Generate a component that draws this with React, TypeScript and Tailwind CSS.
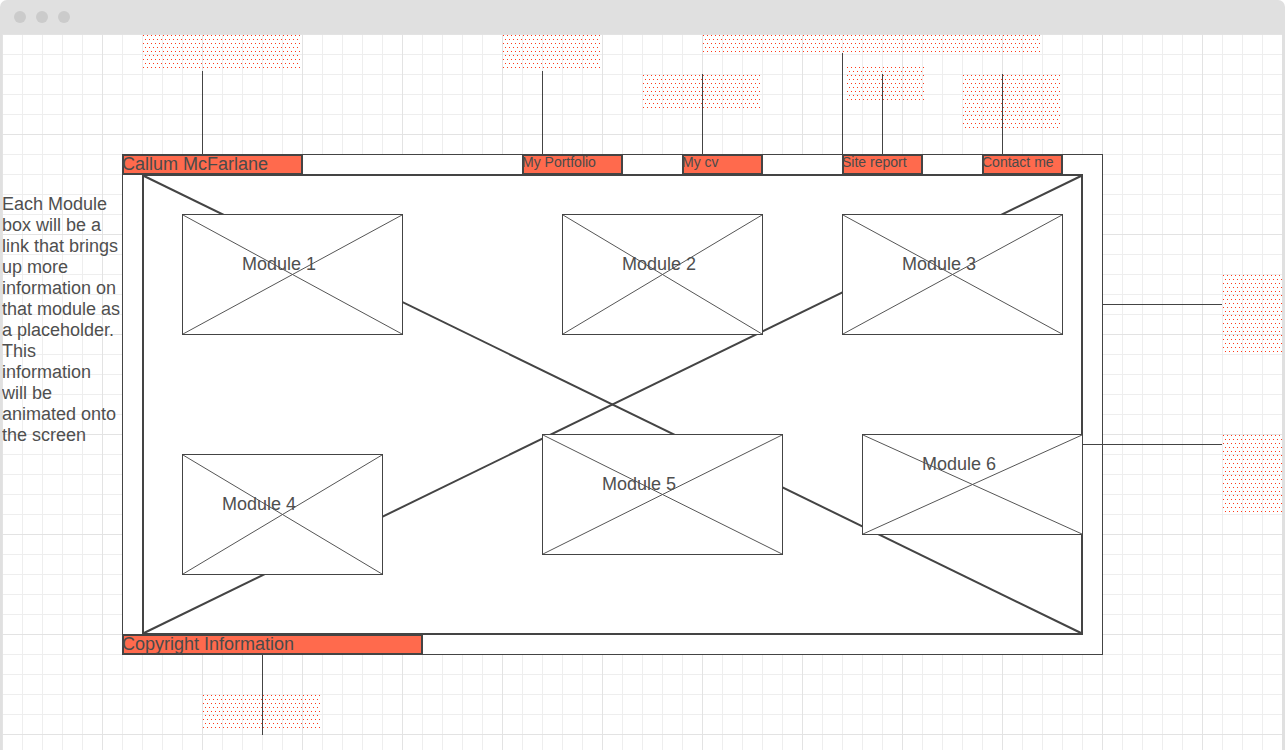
import React from 'react';

// Wireframe canvas: positions are canvas coordinates (page - 2, 34)

const DotBox: React.FC<{ className: string }> = ({ className }) => (
  <div
    className={`absolute bg-[radial-gradient(circle_at_1.5px_1.5px,#ff3a1a_0.85px,transparent_1px),radial-gradient(circle_at_3.5px_5.5px,#ff3a1a_0.85px,transparent_1px)] bg-[length:4px_8px] ${className}`}
  />
);

const Cross: React.FC<{ width?: number; color?: string }> = ({ width = 1, color = '#555' }) => (
  <svg className="absolute inset-0 h-full w-full overflow-visible" xmlns="http://www.w3.org/2000/svg">
    <line x1="0" y1="0" x2="100%" y2="100%" stroke={color} strokeWidth={width} />
    <line x1="100%" y1="0" x2="0" y2="100%" stroke={color} strokeWidth={width} />
  </svg>
);

const Module: React.FC<{ label: string; className: string; labelClass: string }> = ({
  label,
  className,
  labelClass,
}) => (
  <div className={`absolute border border-[#444] bg-white ${className}`}>
    <Cross />
    <span className={`absolute whitespace-nowrap text-[18px] leading-[20px] text-[#4f4f4f] ${labelClass}`}>
      {label}
    </span>
  </div>
);

const Tag: React.FC<{ label: string; className: string; big?: boolean }> = ({ label, className, big }) => (
  <div className={`absolute overflow-visible border-2 border-[#444] bg-[#ff6a4d] ${className}`}>
    <span
      className={`-ml-[2px] block whitespace-nowrap text-[#4a4a4a] ${
        big ? 'text-[18px] leading-[17px]' : 'text-[14px] leading-[13px]'
      }`}
    >
      {label}
    </span>
  </div>
);

const VLine: React.FC<{ className: string }> = ({ className }) => (
  <div className={`absolute w-px bg-[#444] ${className}`} />
);

const HLine: React.FC<{ className: string }> = ({ className }) => (
  <div className={`absolute h-px bg-[#444] ${className}`} />
);

const note = [
  'Each Module',
  'box will be a',
  'link that brings',
  'up more',
  'information on',
  'that module as',
  'a placeholder.',
  'This',
  'information',
  'will be',
  'animated onto',
  'the screen',
];

export default function App() {
  return (
    <div className="h-[750px] w-full overflow-hidden rounded-t-[7px] bg-[#e0e0e0] pl-[2px] pr-[3px] font-['Liberation_Sans',Arial,sans-serif]">
      <div className="flex h-[34px] items-center gap-[10px] pl-[12px]">
        <span className="h-3 w-3 rounded-full bg-[#cbcbcb]" />
        <span className="h-3 w-3 rounded-full bg-[#cbcbcb]" />
        <span className="h-3 w-3 rounded-full bg-[#cbcbcb]" />
      </div>

      <div className="relative h-[716px] overflow-hidden bg-white bg-[linear-gradient(to_right,#e3e3e3_1px,transparent_1px),linear-gradient(to_bottom,#e3e3e3_1px,transparent_1px),linear-gradient(to_right,#eeeeee_1px,transparent_1px),linear-gradient(to_bottom,#eeeeee_1px,transparent_1px)] bg-[length:100px_100px,100px_100px,20px_20px,20px_20px]">
        <DotBox className="left-[140px] top-0 h-[37px] w-[158px]" />
        <DotBox className="left-[500px] top-0 h-[37px] w-[98px]" />
        <DotBox className="left-[640px] top-[40px] h-[37px] w-[118px]" />
        <DotBox className="left-[700px] top-0 h-[19px] w-[338px]" />
        <DotBox className="left-[844px] top-[32px] h-[37px] w-[79px]" />
        <DotBox className="left-[960px] top-[40px] h-[57px] w-[98px]" />
        <DotBox className="left-[1220px] top-[240px] h-[79px] w-[60px]" />
        <DotBox className="left-[1220px] top-[400px] h-[79px] w-[60px]" />
        <DotBox className="left-[200px] top-[660px] h-[37px] w-[118px]" />

        <p className="absolute left-0 top-[160px] w-[121px] text-[18px] leading-[21px] text-[#4f4f4f]">
          {note.map((line, i) => (
            <span key={i} className="block whitespace-nowrap">
              {line}
            </span>
          ))}
        </p>

        <div className="absolute left-[120px] top-[120px] h-[501px] w-[981px] border border-[#444] bg-white">
          <div className="absolute left-[19px] top-[19px] h-[461px] w-[941px] border-2 border-[#444] bg-white">
            <Cross width={2} color="#444" />
            <Module label="Module 1" className="left-[38px] top-[38px] h-[121px] w-[221px]" labelClass="left-[59px] top-[39px]" />
            <Module label="Module 2" className="left-[418px] top-[38px] h-[121px] w-[201px]" labelClass="left-[59px] top-[39px]" />
            <Module label="Module 3" className="left-[698px] top-[38px] h-[121px] w-[221px]" labelClass="left-[59px] top-[39px]" />
            <Module label="Module 4" className="left-[38px] top-[278px] h-[121px] w-[201px]" labelClass="left-[39px] top-[39px]" />
            <Module label="Module 5" className="left-[398px] top-[258px] h-[121px] w-[241px]" labelClass="left-[59px] top-[39px]" />
            <Module label="Module 6" className="left-[718px] top-[258px] h-[101px] w-[221px]" labelClass="left-[59px] top-[19px]" />
          </div>
        </div>

        <Tag label="Callum McFarlane" big className="left-[120px] top-[120px] h-[21px] w-[181px]" />
        <Tag label="My Portfolio" className="left-[520px] top-[120px] h-[21px] w-[101px]" />
        <Tag label="My cv" className="left-[680px] top-[120px] h-[21px] w-[81px]" />
        <Tag label="Site report" className="left-[840px] top-[120px] h-[21px] w-[81px]" />
        <Tag label="Contact me" className="left-[980px] top-[120px] h-[21px] w-[81px]" />
        <Tag label="Copyright Information" big className="left-[120px] top-[600px] h-[21px] w-[301px]" />

        <VLine className="left-[200px] top-[37px] h-[83px]" />
        <VLine className="left-[540px] top-[37px] h-[83px]" />
        <VLine className="left-[700px] top-[40px] h-[80px]" />
        <VLine className="left-[840px] top-[19px] h-[101px]" />
        <VLine className="left-[880px] top-[40px] h-[80px]" />
        <VLine className="left-[1000px] top-[40px] h-[80px]" />
        <VLine className="left-[260px] top-[621px] h-[80px]" />
        <HLine className="left-[1100px] top-[270px] w-[120px]" />
        <HLine className="left-[1080px] top-[410px] w-[140px]" />
      </div>
    </div>
  );
}
